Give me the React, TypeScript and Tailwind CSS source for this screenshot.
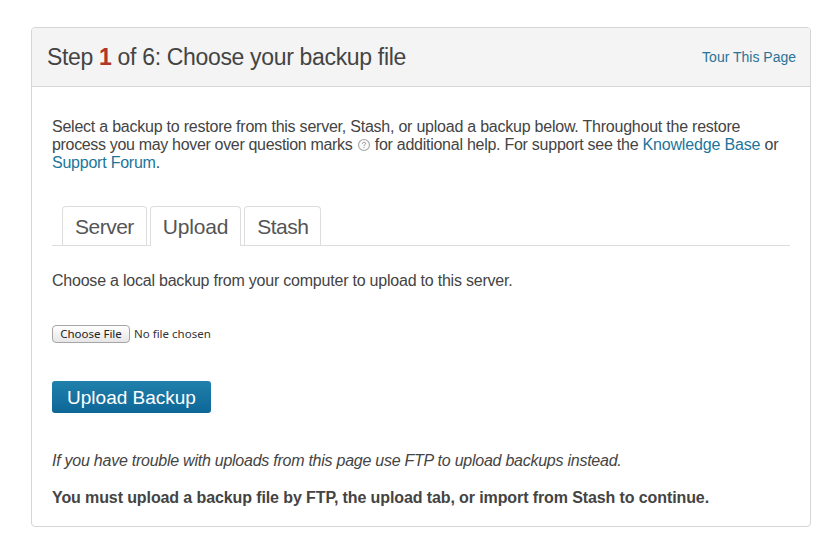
import React from 'react'

export default function App() {
  return (
    <div className="min-h-[551px] bg-white pt-[27px] pl-[31px] pr-[24px] text-[#444444] font-['Liberation_Sans',Arial,sans-serif]">
      <div className="w-[780px] h-[500px] rounded-[4px] border border-[#d5d5d5] bg-white overflow-hidden">
        {/* header */}
        <div className="flex h-[59px] items-center justify-between border-b border-[#d5d5d5] bg-[#f4f4f4] pl-[15px] pr-[14px]">
          <h1 className="text-[23px] leading-[30px] tracking-[-0.33px] text-[#444444]">
            Step <strong className="text-[#b0352a]">1</strong> of 6: Choose your backup file
          </h1>
          <a className="text-[14px] leading-[20px] text-[#2a7396]">Tour This Page</a>
        </div>

        <div className="pl-[20px] pr-[20px] pt-[31px]">
          <p className="text-[16px] leading-[18px] tracking-[-0.23px]">
            Select a backup to restore from this server, Stash, or upload a backup below. Throughout the restore{' '}
            <span className="tracking-[-0.33px]">process you may hover over question marks </span>
            <svg className="inline-block align-[-2px]" width="14" height="14" viewBox="0 0 14 14">
              <circle cx="7" cy="7" r="5.5" fill="#fafafa" stroke="#a8a8a8" strokeWidth="1.2" />
              <path d="M5.4 5.7 C5.5 4.7 6.2 4.3 7 4.3 C7.9 4.3 8.6 4.8 8.6 5.6 C8.6 6.6 7 6.7 7 7.9" fill="none" stroke="#8a8a8a" strokeWidth="1" />
              <circle cx="7" cy="9.5" r="0.6" fill="#8a8a8a" />
            </svg>{' '}
            <span className="tracking-[-0.26px]">for additional help. For support see the </span>
            <a className="tracking-[-0.16px] text-[#21759b]">Knowledge Base</a> or{' '}
            <a className="text-[#21759b]">Support Forum</a>.
          </p>

          {/* tabs */}
          <div className="mt-[34px] flex h-[40px] gap-[3px] border-b border-[#dddddd] pl-[10px]">
            <div className="h-[39px] rounded-t-[4px] border border-b-0 border-[#dddddd] px-[12px] pt-[7px] text-[21px] leading-[26px] tracking-[-0.5px] text-[#555555]">Server</div>
            <div className="h-[40px] rounded-t-[4px] border border-b-0 border-[#dddddd] bg-white px-[12px] pt-[7px] text-[21px] leading-[26px] tracking-[-0.2px] text-[#555555]">Upload</div>
            <div className="h-[39px] rounded-t-[4px] border border-b-0 border-[#dddddd] px-[12px] pt-[7px] text-[21px] leading-[26px] tracking-[-0.5px] text-[#555555]">Stash</div>
          </div>

          <p className="mt-[25px] text-[16px] leading-[20px] tracking-[-0.22px]">Choose a local backup from your computer to upload to this server.</p>

          {/* file input */}
          <div className="mt-[34px] flex h-[18px] items-center">
            <button className="h-[18px] w-[78px] rounded-[4px] border border-[#a5a5a5] bg-gradient-to-b from-[#ffffff] to-[#e6e6e6] text-[11.5px] leading-[14px] text-[#222222] font-['Noto_Sans',sans-serif]">Choose File</button>
            <span className="ml-[4px] text-[11.5px] leading-[14px] text-[#333333] font-['Noto_Sans',sans-serif]">No file chosen</span>
          </div>

          <button className="mt-[38px] block h-[32px] w-[159px] rounded-[3px] bg-gradient-to-b from-[#2180ac] to-[#0c6797] pt-[1px] text-[19px] leading-[22px] text-white">Upload Backup</button>

          <p className="mt-[38px] text-[16px] leading-[20px] italic tracking-[-0.25px]">If you have trouble with uploads from this page use FTP to upload backups instead.</p>
          <p className="mt-[17px] text-[16px] leading-[20px] font-bold tracking-[-0.105px]">You must upload a backup file by FTP, the upload tab, or import from Stash to continue.</p>
        </div>
      </div>
    </div>
  )
}
